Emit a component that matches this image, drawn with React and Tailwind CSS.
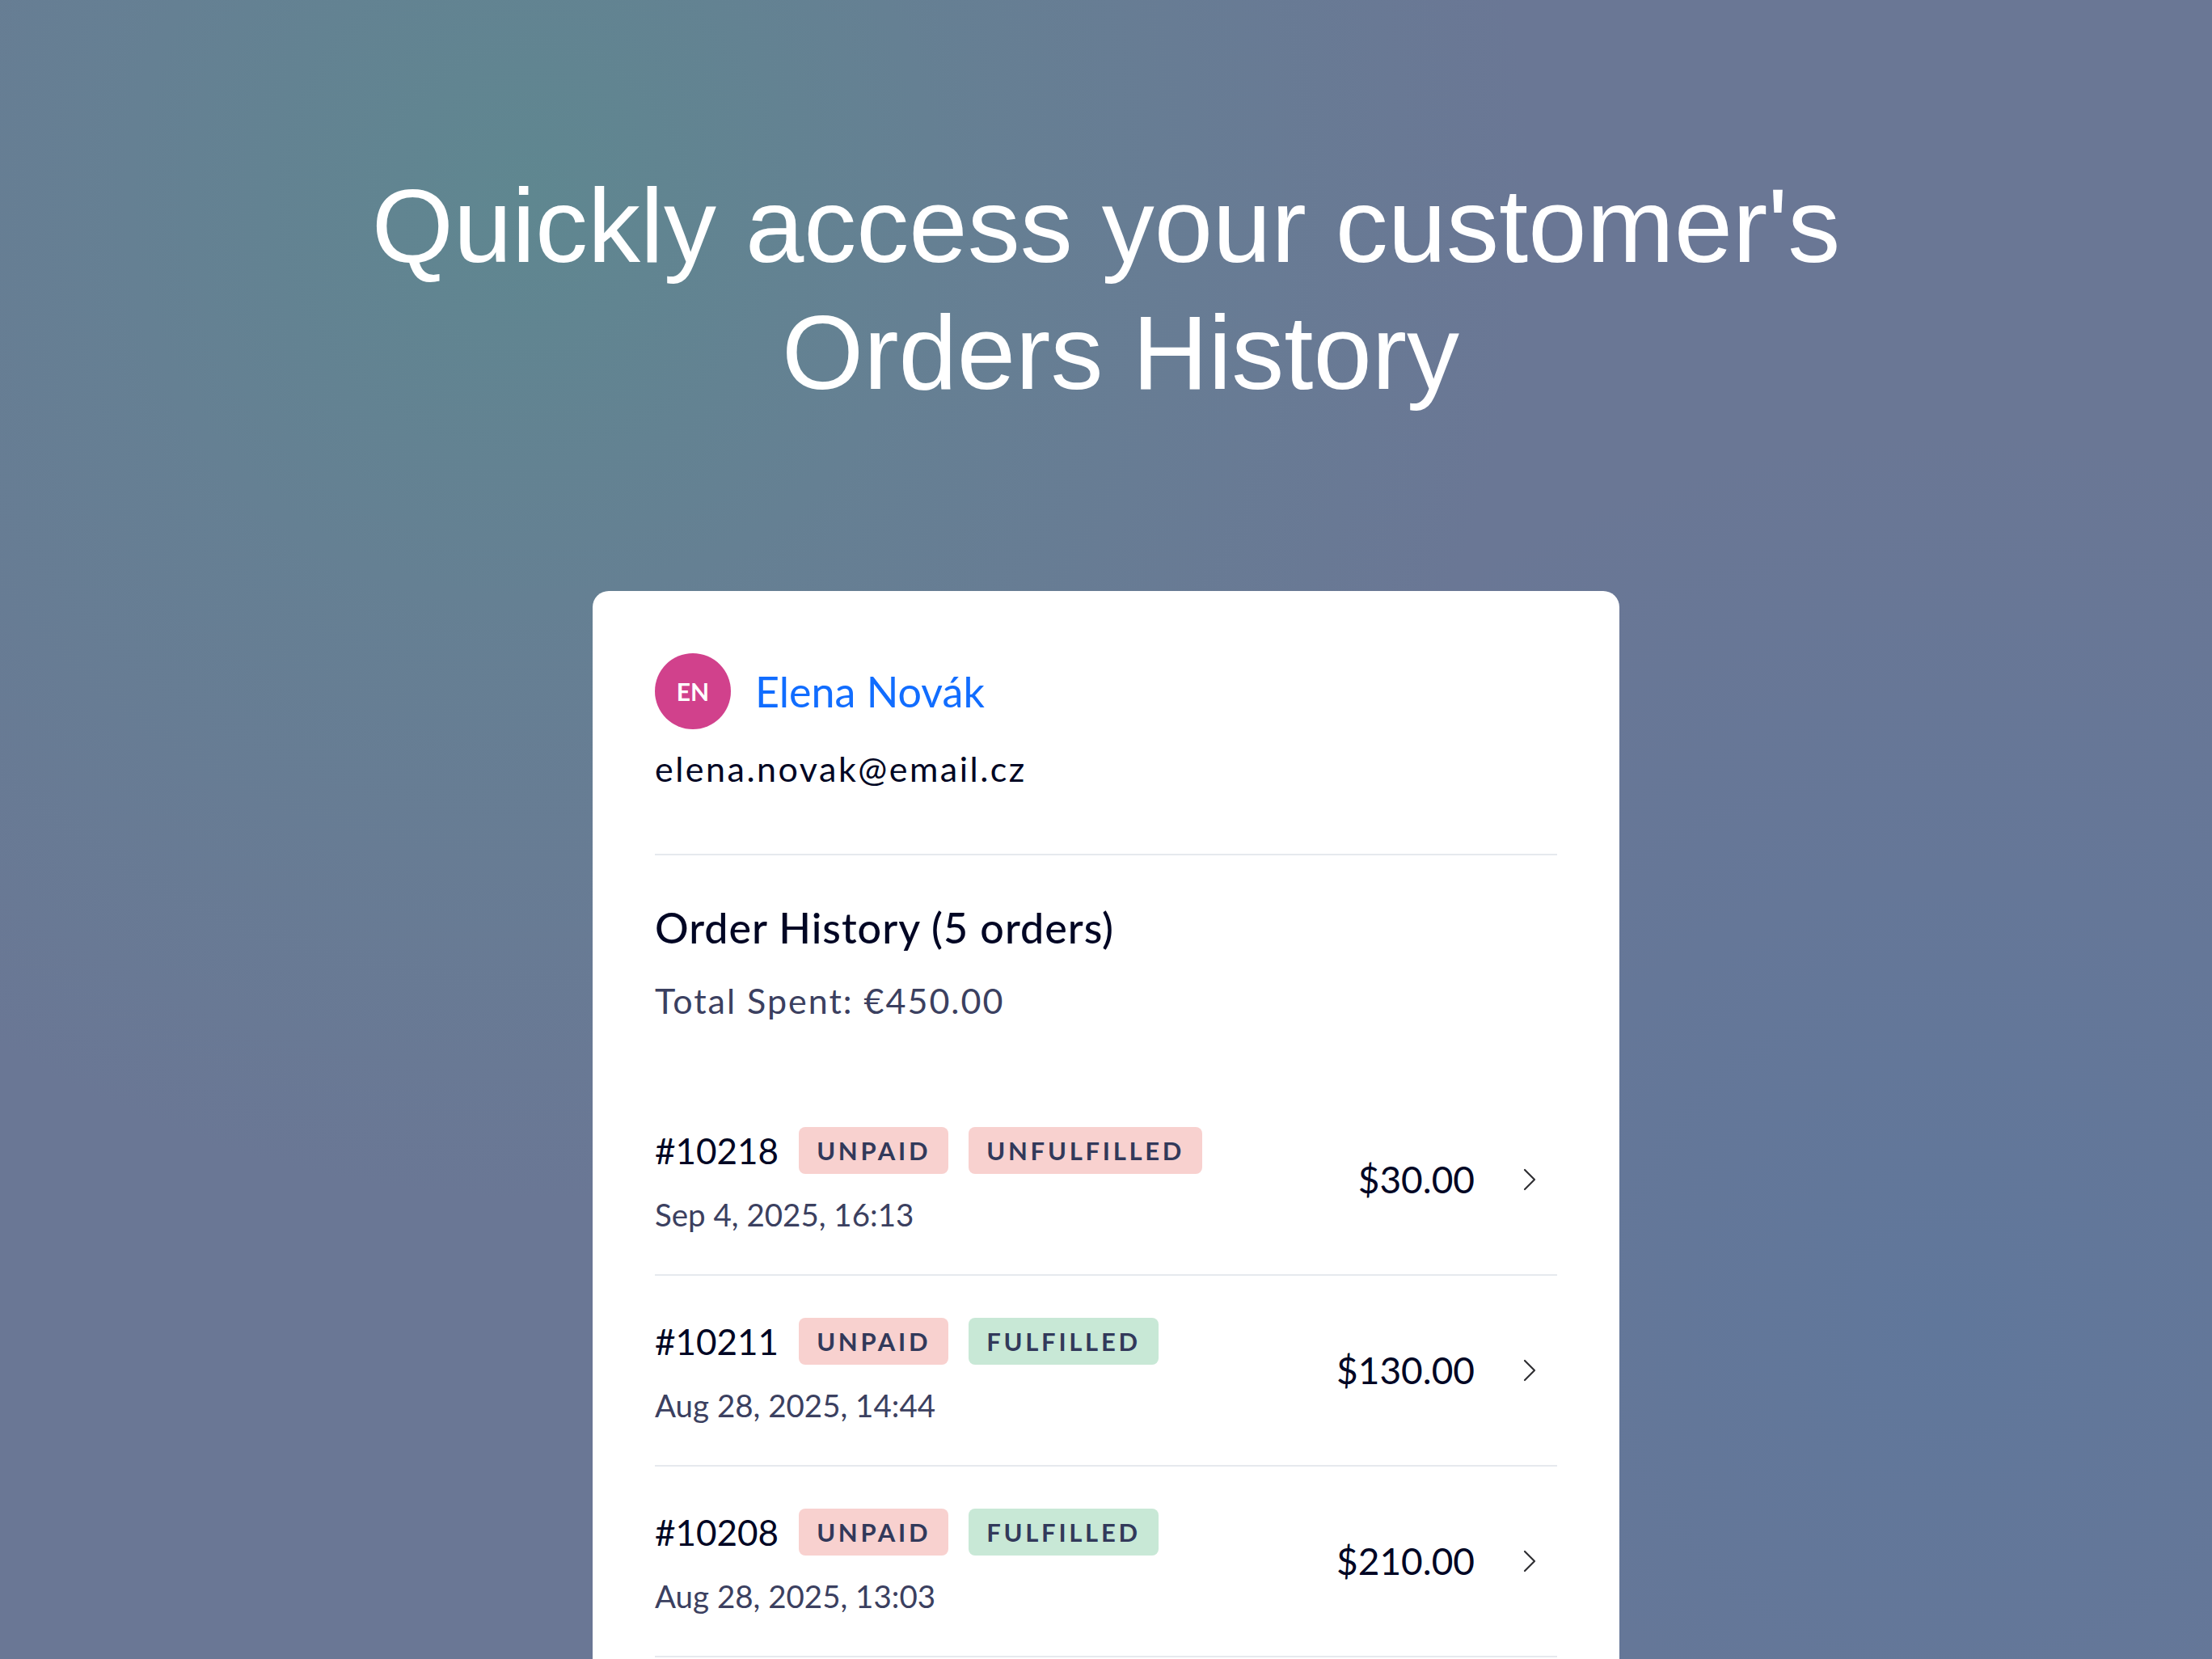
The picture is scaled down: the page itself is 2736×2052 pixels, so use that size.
import React from 'react';

// only the first three orders are in view; the card runs past the bottom edge
const orders = [
  { id: '#10218', paid: false, fulfilled: false, date: 'Sep 4, 2025, 16:13', total: '$30.00' },
  { id: '#10211', paid: false, fulfilled: true, date: 'Aug 28, 2025, 14:44', total: '$130.00' },
  { id: '#10208', paid: false, fulfilled: true, date: 'Aug 28, 2025, 13:03', total: '$210.00' },
];

function Badge({ tone, children }) {
  // pink for unpaid / unfulfilled, green for fulfilled
  const bg = tone === 'green' ? 'bg-[#c8e8d6]' : 'bg-[#f8d1cf]';
  return (
    <span
      className={`${bg} flex h-[58px] items-center rounded-[8px] px-[22px] text-[31px] font-bold uppercase tracking-[0.12em] text-[#32395a]`}
    >
      {children}
    </span>
  );
}

function OrderRow({ order }) {
  return (
    <div className="flex items-center border-b-2 border-[#e6e9ee] py-[52px]">
      <div className="flex flex-1 flex-col gap-[28px]">
        <div className="flex items-center gap-[25px]">
          <span className="text-[44px] leading-[58px] text-[#000624]">{order.id}</span>
          <Badge tone={order.paid ? 'green' : 'pink'}>{order.paid ? 'Paid' : 'Unpaid'}</Badge>
          <Badge tone={order.fulfilled ? 'green' : 'pink'}>
            {order.fulfilled ? 'Fulfilled' : 'Unfulfilled'}
          </Badge>
        </div>
        <span className="text-[38.5px] leading-[44px] text-[#3b4060]">{order.date}</span>
      </div>
      <span className="text-[46px] leading-[58px] text-[#000624]">{order.total}</span>
      <div className="ml-[60px] mr-[26px] flex w-[16px] justify-center">
        <svg width="16" height="28" viewBox="0 0 16 28" fill="none">
          <polyline points="2,2 14,14 2,26" stroke="#2f2f33" strokeWidth="2.2" strokeLinecap="round" strokeLinejoin="round" />
        </svg>
      </div>
    </div>
  );
}

export default function App() {
  return (
    <div className="flex h-[2052px] w-full flex-col items-center overflow-hidden bg-[#6a7795] bg-[radial-gradient(circle_at_24%_12%,#5f8790_0%,rgba(98,134,146,0.55)_20%,transparent_45%),radial-gradient(circle_at_88%_80%,#60779b_0%,transparent_38%)] pt-[201px]">
      <h1 className="text-center font-['Liberation_Sans',Arial,sans-serif] text-[130px] leading-[157px] font-normal text-white">
        Quickly access your customer's
        <br />
        {'\u00A0'}Orders History
      </h1>

      <div className="mt-[216px] w-[1270px] shrink-0 rounded-[20px] bg-white px-[77px] pt-[77px] pb-[120px] font-['Lato',sans-serif]">
        <div className="flex h-[94px] items-center gap-[30px]">
          <div className="flex h-[94px] w-[94px] items-center justify-center rounded-full bg-[#d1418c] text-[30px] font-bold text-white">
            EN
          </div>
          <span className="text-[52px] leading-[62px] text-[#116dff]">Elena Novák</span>
        </div>
        <div className="mt-[26px] text-[43px] leading-[46px] tracking-[2.5px] text-[#000624]">
          elena.novak@email.cz
        </div>

        <div className="mt-[82px] h-[2px] bg-[#e6e9ee]" />

        <div className="mt-[60px] text-[52px] leading-[58px] font-medium tracking-[1px] text-[#000624]">
          Order History (5 orders)
        </div>
        <div className="mt-[38px] text-[43px] leading-[48px] tracking-[2px] text-[#3b4060]">
          Total Spent: €450.00
        </div>

        <div className="mt-[80px] flex flex-col">
          {orders.map((o) => (
            <OrderRow key={o.id} order={o} />
          ))}
        </div>
      </div>
    </div>
  );
}
